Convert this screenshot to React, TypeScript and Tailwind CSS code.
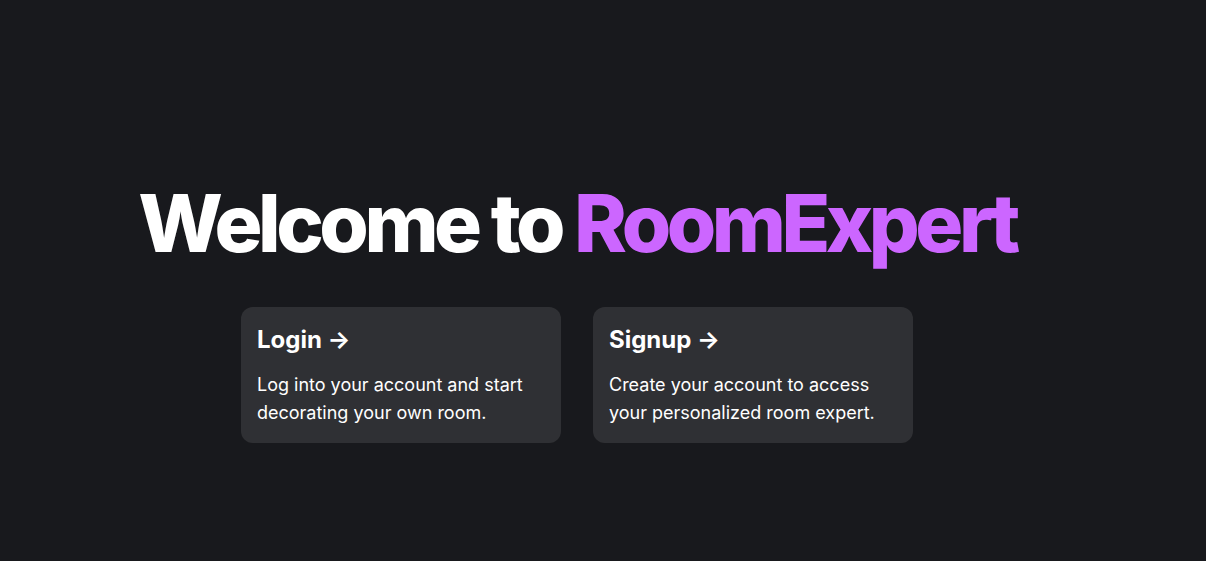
export default function App() {
  return (
    <main
      className="flex min-h-screen flex-col items-center bg-[#18191d] pt-[183px] pr-[52px] text-white"
      style={{ fontFamily: 'Inter, "Noto Sans", sans-serif' }}
    >
      <div className="flex flex-col items-center gap-[44px]">
        <h1 className="text-[80px] leading-[80px] font-extrabold tracking-[-0.056em] text-white">
          Welcome to <span className="text-[#cc66ff]">RoomExpert</span>
        </h1>
        <div className="grid grid-cols-2 gap-8">
          <a className="flex w-80 flex-col gap-[15px] rounded-xl bg-white/10 p-4">
            <h3 className="text-2xl leading-8 font-bold pt-px">Login →</h3>
            <div className="text-lg leading-7">
              Log into your account and start decorating your own room.
            </div>
          </a>
          <a className="flex w-80 flex-col gap-[15px] rounded-xl bg-white/10 p-4">
            <h3 className="text-2xl leading-8 font-bold pt-px">Signup →</h3>
            <div className="text-lg leading-7">
              Create your account to access your personalized room expert.
            </div>
          </a>
        </div>
      </div>
    </main>
  );
}
